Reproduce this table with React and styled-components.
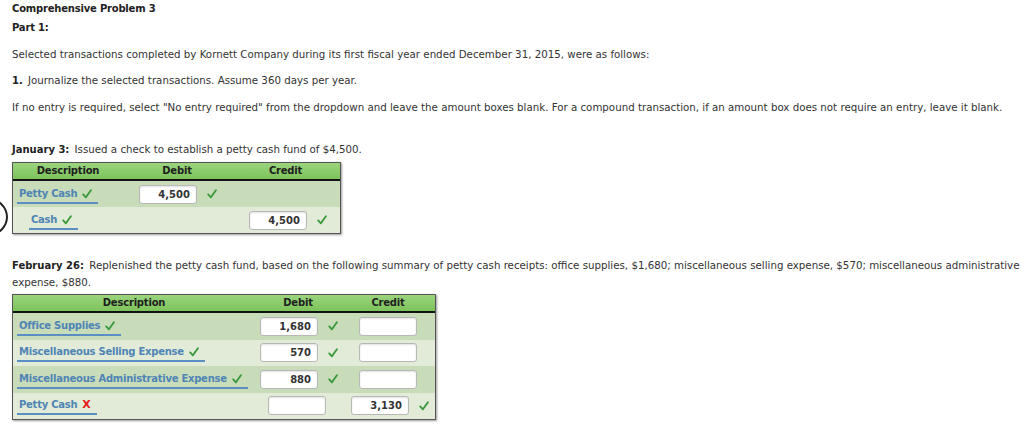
import React from "react";
import styled, { createGlobalStyle } from "styled-components";

const GlobalStyle = createGlobalStyle`
  html, body {
    margin: 0;
    padding: 0;
    background: #ffffff;
  }
  body {
    font-family: "DejaVu Sans", Verdana, sans-serif;
    font-size: 10.25px;
    color: #333333;
  }
`;

const Page = styled.div`
  position: relative;
  width: 1024px;
  height: 430px;
  overflow: hidden;
  padding: 1px 0 0 12px;
  box-sizing: border-box;
`;

const Title = styled.div`
  font-weight: bold;
  font-size: 10px;
  letter-spacing: -0.2px;
  line-height: 16px;
  color: #222;
  margin-top: ${(p) => p.$top || 0}px;
`;

const Para = styled.p`
  margin: ${(p) => p.$top || 0}px 0 0 0;
  line-height: ${(p) => p.$lh || 16}px;
`;

const Strong = styled.b`
  color: #222;
  font-size: 10px;
  margin-right: 2px;
`;

const Arc = styled.div`
  position: absolute;
  left: -32px;
  top: 198px;
  width: 36px;
  height: 34px;
  border: 2px solid #222;
  border-radius: 50%;
`;

const Table = styled.div`
  display: grid;
  grid-template-columns: ${(p) => p.$cols};
  width: ${(p) => p.$width}px;
  margin-top: ${(p) => p.$top}px;
  border: 1px solid #555;
  box-shadow: 1px 1px 2px #999;
`;

const Head = styled.div`
  height: 16px;
  line-height: 16px;
  text-align: center;
  font-weight: bold;
  font-size: 10px;
  letter-spacing: -0.2px;
  color: #1e1e1e;
  background: linear-gradient(#9bd47e, #7cc35a);
  border-bottom: 2px solid #111;
`;

const Cell = styled.div`
  height: ${(p) => p.$h || 26}px;
  display: flex;
  align-items: center;
  padding-left: ${(p) => p.$indent || 0}px;
  background: ${(p) => (p.$shade ? "#c8dcba" : "#e1ebd7")};
`;

const Account = styled.span`
  display: inline-flex;
  align-items: center;
  white-space: nowrap;
  margin-left: ${(p) => p.$indent || 4}px;
  padding: 0 6px 1px 2px;
  margin-top: 2px;
  border-bottom: 2px solid #5b8fc4;
  color: #4f84b5;
  font-weight: bold;
  font-size: 10px;
  letter-spacing: -0.25px;
  line-height: 14px;
`;

const Cross = styled.span`
  color: #e41b1b;
  font-weight: bold;
  font-size: 11px;
  margin-left: 5px;
`;

const Amount = styled.input`
  width: 58px;
  height: 19px;
  box-sizing: border-box;
  border: 1px solid #b8b8b8;
  border-radius: 3px;
  background: #fff;
  box-shadow: inset 0 1px 2px rgba(0, 0, 0, 0.12);
  font-family: "DejaVu Sans", Verdana, sans-serif;
  font-size: 10px;
  font-weight: bold;
  color: #333;
  text-align: right;
  padding: 0 6px 0 2px;
  outline: none;
`;

const Mark = styled.svg`
  width: 10px;
  height: 10px;
  margin-left: ${(p) => p.$gap}px;
  flex: none;
`;

function Tick({ gap = 10 }) {
  return (
    <Mark $gap={gap} viewBox="0 0 10 10">
      <path
        d="M1.2 5.4 L3.9 8.3 L8.9 1.2"
        fill="none"
        stroke="#3c9a3c"
        strokeWidth="1.9"
        strokeLinecap="round"
        strokeLinejoin="round"
      />
    </Mark>
  );
}

function AmountCell({ value, ok, indent, shade, h }) {
  return (
    <Cell $indent={indent} $shade={shade} $h={h}>
      <Amount readOnly value={value || ""} />
      {ok && <Tick gap={10} />}
    </Cell>
  );
}

function DescCell({ name, mark, indent, shade, h }) {
  return (
    <Cell $shade={shade} $h={h}>
      <Account $indent={indent}>
        {name}
        {mark === "ok" ? <Tick gap={5} /> : <Cross>X</Cross>}
      </Account>
    </Cell>
  );
}

const febRows = [
  { name: "Office Supplies", debit: "1,680", shade: true },
  { name: "Miscellaneous Selling Expense", debit: "570", shade: false },
  { name: "Miscellaneous Administrative Expense", debit: "880", shade: true },
];

export default function App() {
  return (
    <Page>
      <GlobalStyle />
      <Arc />
      <Title>Comprehensive Problem 3</Title>
      <Title $top={3}>Part 1:</Title>
      <Para $top={10}>
        Selected transactions completed by Kornett Company during its first
        fiscal year ended December 31, 2015, were as follows:
      </Para>
      <Para $top={10}>
        <Strong>1.</Strong> Journalize the selected transactions. Assume 360
        days per year.
      </Para>
      <Para $top={10}>
        If no entry is required, select "No entry required" from the dropdown
        and leave the amount boxes blank. For a compound transaction, if an
        amount box does not require an entry, leave it blank.
      </Para>

      <Para $top={26}>
        <Strong>January 3:</Strong> Issued a check to establish a petty cash
        fund of $4,500.
      </Para>
      <Table $cols="110px 108px 1fr" $width={327} $top={4}>
        <Head>Description</Head>
        <Head>Debit</Head>
        <Head>Credit</Head>
        <DescCell name="Petty Cash" mark="ok" shade />
        <AmountCell value="4,500" ok indent={16} shade />
        <Cell $shade />
        <DescCell name="Cash" mark="ok" indent={16} />
        <Cell />
        <AmountCell value="4,500" ok indent={18} />
      </Table>

      <Para $top={23} $lh={17}>
        <Strong>February 26:</Strong> Replenished the petty cash fund, based on
        the following summary of petty cash receipts: office supplies, $1,680;
        miscellaneous selling expense, $570; miscellaneous administrative
        expense, $880.
      </Para>
      <Table $cols="242px 86px 1fr" $width={422} $top={3}>
        <Head>Description</Head>
        <Head>Debit</Head>
        <Head>Credit</Head>
        {febRows.map((r) => (
          <React.Fragment key={r.name}>
            <DescCell name={r.name} mark="ok" shade={r.shade} h={26.5} />
            <AmountCell value={r.debit} ok indent={5} shade={r.shade} h={26.5} />
            <AmountCell indent={18} shade={r.shade} h={26.5} />
          </React.Fragment>
        ))}
        <DescCell name="Petty Cash" mark="bad" h={26.5} />
        <AmountCell indent={13} h={26.5} />
        <AmountCell value="3,130" ok indent={10} h={26.5} />
      </Table>
    </Page>
  );
}
